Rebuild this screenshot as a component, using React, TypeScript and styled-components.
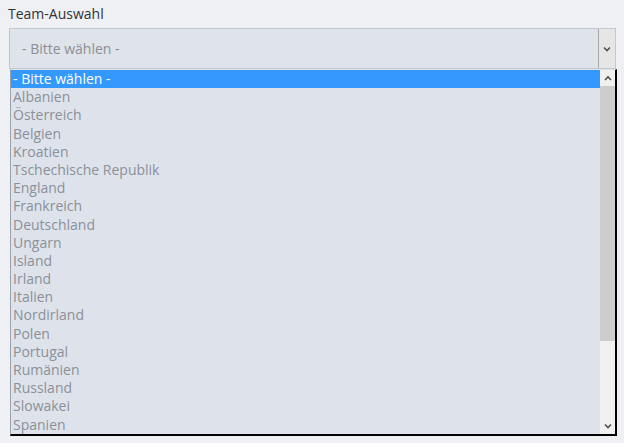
import React from "react";
import styled, { createGlobalStyle } from "styled-components";

const GlobalStyle = createGlobalStyle`
  html, body { margin: 0; padding: 0; background: #eef0f3; }
  body { font-family: "Open Sans", "Noto Sans", sans-serif; }
`;

const Page = styled.div`
  width: 624px;
  height: 443px;
  box-sizing: border-box;
  padding: 5px 8px 0 8px;
  overflow: hidden;
`;

const Label = styled.div`
  font-size: 14px;
  line-height: 18px;
  color: #333;
  height: 23px;
`;

const SelectBox = styled.div`
  display: flex;
  height: 41px;
  box-sizing: border-box;
  margin-left: 1px;
  border: 1px solid #c3c8cf;
  background: #dfe3ea;
`;

const SelectText = styled.div`
  flex: 1;
  display: flex;
  align-items: center;
  padding-left: 12px;
  font-size: 14px;
  color: #8b8f96;
`;

const ArrowButton = styled.div`
  width: 16px;
  display: flex;
  align-items: center;
  justify-content: center;
  background: #e6e6e6;
  border-left: 1px solid #a8a8a8;
`;

const Dropdown = styled.div`
  display: flex;
  margin-left: 2px;
  width: 607px;
  height: 367px;
  box-sizing: border-box;
  border-left: 1px solid #9aa3ad;
  border-right: 2px solid #000;
  border-bottom: 2px solid #000;
  border-top: 1px solid #dfe3ea;
  background: #dee3eb;
`;

const List = styled.div`
  flex: 1;
  min-height: 0;
  overflow: hidden;
`;

const Item = styled.div<{ $active?: boolean }>`
  height: 18.2px;
  line-height: 18px;
  padding-left: 2px;
  font-size: 14px;
  white-space: nowrap;
  color: ${(p) => (p.$active ? "#ffffff" : "#8b9099")};
  background: ${(p) => (p.$active ? "#3399ff" : "transparent")};
`;

const Scrollbar = styled.div`
  width: 15px;
  display: flex;
  flex-direction: column;
  background: #f0f0f0;
`;

const ScrollArrow = styled.div`
  height: 16px;
  display: flex;
  align-items: center;
  justify-content: center;
`;

const Track = styled.div`
  flex: 1;
  display: flex;
  flex-direction: column;
`;

const Thumb = styled.div`
  height: 255px;
  background: #cdcdcd;
`;

const Chevron = ({ up }: { up?: boolean }) => (
  <svg width="8" height="6" viewBox="0 0 8 6">
    <path
      d={up ? "M1 5 L4 2 L7 5" : "M1 1.5 L4 4.5 L7 1.5"}
      fill="none"
      stroke="#505050"
      strokeWidth="1.6"
    />
  </svg>
);

const teams = [
  "- Bitte wählen -",
  "Albanien",
  "Österreich",
  "Belgien",
  "Kroatien",
  "Tschechische Republik",
  "England",
  "Frankreich",
  "Deutschland",
  "Ungarn",
  "Island",
  "Irland",
  "Italien",
  "Nordirland",
  "Polen",
  "Portugal",
  "Rumänien",
  "Russland",
  "Slowakei",
  "Spanien",
];

export default function App() {
  return (
    <>
      <GlobalStyle />
      <Page>
        <Label>Team-Auswahl</Label>
        <SelectBox>
          <SelectText>- Bitte wählen -</SelectText>
          <ArrowButton>
            <Chevron />
          </ArrowButton>
        </SelectBox>
        <Dropdown>
          <List>
            {teams.map((t, i) => (
              <Item key={t} $active={i === 0}>
                {t}
              </Item>
            ))}
          </List>
          <Scrollbar>
            <ScrollArrow>
              <Chevron up />
            </ScrollArrow>
            <Track>
              <Thumb />
            </Track>
            <ScrollArrow>
              <Chevron />
            </ScrollArrow>
          </Scrollbar>
        </Dropdown>
      </Page>
    </>
  );
}
